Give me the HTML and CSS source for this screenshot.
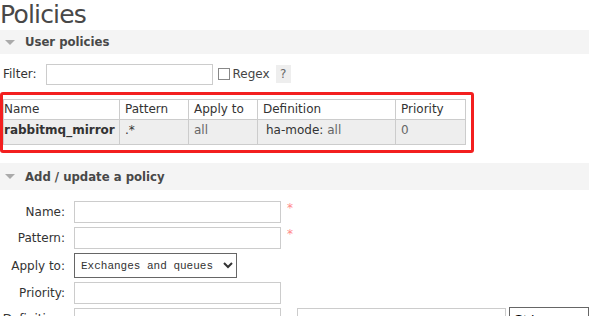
FILE: index.html
```
<!DOCTYPE html>
<html lang="en">
<head>
  <meta charset="UTF-8">
  <title>Policies</title>
  <link rel="stylesheet" href="styles.css">
</head>
<body>
  <h1 class="title">Policies</h1>

  <div class="section-head"><span class="arrow"></span>User policies</div>

  <div class="filter-row">
    <label>Filter:</label>
    <input type="text" class="filter-input">
    <input type="checkbox" class="regex-box">
    <span class="regex-label">Regex</span>
    <span class="help">?</span>
  </div>

  <div class="highlight">
    <table class="list">
      <thead>
        <tr>
          <th class="c-name">Name</th>
          <th class="c-pattern">Pattern</th>
          <th class="c-apply">Apply to</th>
          <th class="c-def">Definition</th>
          <th class="c-prio">Priority</th>
        </tr>
      </thead>
      <tbody>
        <tr>
          <td class="c-name"><b>rabbitmq_mirror</b></td>
          <td>.*</td>
          <td class="muted">all</td>
          <td class="def">ha-mode: <span class="muted">all</span></td>
          <td class="muted">0</td>
        </tr>
      </tbody>
    </table>
  </div>

  <div class="section-head second"><span class="arrow"></span>Add / update a policy</div>

  <form class="policy-form">
    <div class="form-row">
      <label>Name:</label>
      <input type="text" class="field">
      <span class="req">*</span>
    </div>
    <div class="form-row">
      <label>Pattern:</label>
      <input type="text" class="field">
      <span class="req">*</span>
    </div>
    <div class="form-row tall">
      <label>Apply to:</label>
      <select class="apply-select">
        <option>Exchanges and queues</option>
      </select>
    </div>
    <div class="form-row">
      <label>Priority:</label>
      <input type="text" class="field">
    </div>
    <div class="form-row">
      <label>Definition:</label>
      <input type="text" class="field">
      <input type="text" class="field def-value">
      <select class="def-type"><option>String</option></select>
    </div>
  </form>
</body>
</html>
```

FILE: styles.css
```
/* General styles */
body {
  margin: 0;
  font-family: "DejaVu Sans", Verdana, sans-serif;
  font-size: 12px;
  color: #444;
  background: #fff;
  overflow: hidden;
}

.title {
  margin: 0;
  padding: 0;
  font-size: 25px;
  font-weight: normal;
  color: #484848;
  line-height: 30px;
  letter-spacing: -0.8px;
}

.section-head {
  display: flex;
  align-items: center;
  height: 24px;
  background: #f4f4f4;
  font-weight: bold;
  font-size: 11.7px;
  color: #484848;
  padding-left: 5px;
}

.section-head.second {
  margin-top: 10px;
  height: 27px;
}

.arrow {
  width: 0;
  height: 0;
  border-left: 5px solid transparent;
  border-right: 5px solid transparent;
  border-top: 5px solid #aaa;
  margin-right: 10px;
}

.filter-row {
  display: flex;
  align-items: center;
  height: 22px;
  margin: 9px 0 0 3px;
}

.filter-row label {
  color: #333;
  margin-right: 9px;
}

.filter-input {
  width: 167px;
  height: 21px;
  box-sizing: border-box;
  border: 1px solid #ccc;
  margin: 0;
  padding: 0;
}

.regex-box {
  width: 12px;
  height: 12px;
  margin: 0 3px 0 5px;
  appearance: none;
  border: 1px solid #888;
  background: #fff;
}

.regex-label {
  color: #444;
}

.help {
  display: inline-block;
  margin-left: 6px;
  width: 15px;
  height: 18px;
  line-height: 18px;
  text-align: center;
  background: #eee;
  color: #666;
}

.highlight {
  width: max-content;
  margin-top: 7px;
  border: 3px solid #f31f1f;
  border-radius: 3px;
  padding: 4px 5px 5px 0;
}

.list {
  border-collapse: collapse;
  color: #333;
}

.list th,
.list td {
  border: 1px solid #ccc;
  text-align: left;
  font-weight: normal;
  padding: 0 0 0 5px;
  white-space: nowrap;
  line-height: 15px;
}

.list th {
  height: 17px;
  padding-top: 2px;
  vertical-align: top;
}

.list td {
  height: 21px;
  background: #eee;
  vertical-align: top;
  padding-top: 3px;
}

.list .c-name { width: 115px; padding-left: 0; }
.list .c-pattern { width: 63px; }
.list .c-apply { width: 63px; }
.list .c-def { width: 132px; }
.list .c-prio { width: 64px; }

.list td.def { padding-left: 8px; }

.muted {
  color: #666;
}

.policy-form {
  margin-top: 9px;
}

.form-row {
  display: flex;
  align-items: center;
  height: 26px;
}

.form-row.tall {
  height: 29px;
}

.form-row label {
  width: 65px;
  text-align: right;
  margin-right: 9px;
  color: #333;
}

.field {
  width: 207px;
  height: 22px;
  box-sizing: border-box;
  border: 1px solid #ccc;
  margin: 0;
  padding: 0;
}

.req {
  color: #f88;
  margin-left: 6px;
  align-self: flex-start;
  margin-top: 2px;
}

.apply-select {
  width: 163px;
  height: 25px;
  border: 1px solid #666;
  border-radius: 0;
  background: #fff;
  font-family: "Liberation Mono", monospace;
  font-size: 11px;
  color: #333;
  padding: 0 2px;
}

.def-value {
  margin-left: 16px;
  width: 210px;
}

.def-type {
  margin-left: 3px;
  width: 80px;
  height: 24px;
  border: 1px solid #666;
  background: #fff;
}
```
